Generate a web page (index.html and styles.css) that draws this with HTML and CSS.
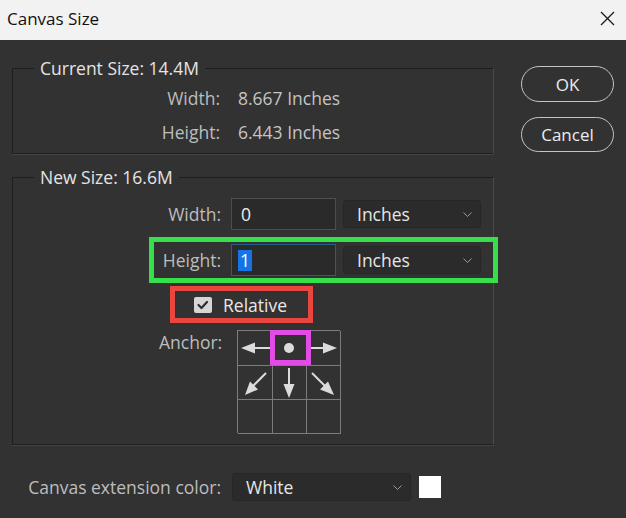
FILE: index.html
```html
<!DOCTYPE html>
<html>
<head>
<meta charset="utf-8">
<link rel="stylesheet" href="styles.css">
</head>
<body>
<div class="titlebar">
  <span class="title">Canvas Size</span>
  <svg class="close" viewBox="0 0 15 15"><path d="M1 1 L14 14 M14 1 L1 14" stroke="#1a1a1a" stroke-width="1.3" fill="none"/></svg>
</div>
<div class="dialog">
  <div class="main">
    <fieldset class="group group-current">
      <legend>Current Size: 14.4M</legend>
      <div class="info-grid">
        <span class="lbl">Width:</span><span class="val">8.667 Inches</span>
        <span class="lbl">Height:</span><span class="val">6.443 Inches</span>
      </div>
    </fieldset>
    <fieldset class="group group-new">
      <legend>New Size: 16.6M</legend>
      <div class="field-row">
        <span class="lbl field-lbl">Width:</span>
        <div class="input">0</div>
        <div class="select unit"><span>Inches</span><svg class="chev" viewBox="0 0 9 5"><path d="M0.5 0.5 L4.5 4.5 L8.5 0.5" stroke="#9a9a9a" stroke-width="1" fill="none"/></svg></div>
      </div>
      <div class="field-row hl-green">
        <span class="lbl field-lbl">Height:</span>
        <div class="input focused"><span class="sel">1</span></div>
        <div class="select unit"><span>Inches</span><svg class="chev" viewBox="0 0 9 5"><path d="M0.5 0.5 L4.5 4.5 L8.5 0.5" stroke="#9a9a9a" stroke-width="1" fill="none"/></svg></div>
      </div>
      <div class="relative-row hl-red">
        <span class="checkbox"><svg viewBox="0 0 18 16"><path d="M4.5 8 L7.5 11 L13 5" stroke="#2e2e2e" stroke-width="2.2" fill="none" stroke-linecap="round" stroke-linejoin="round"/></svg></span>
        <span class="rel-text">Relative</span>
      </div>
      <div class="anchor-row">
        <span class="lbl anchor-lbl">Anchor:</span>
        <div class="anchor-grid">
          <div class="cell"><svg viewBox="0 0 34 34"><line x1="16" y1="17" x2="34" y2="17" class="shaft"/><polygon points="3,17 17,11.5 17,22.5" class="head"/></svg></div>
          <div class="cell current"><svg viewBox="0 0 34 34"><circle cx="17" cy="17" r="5" class="head"/></svg></div>
          <div class="cell"><svg viewBox="0 0 34 34"><line x1="0" y1="17" x2="18" y2="17" class="shaft"/><polygon points="31,17 17,11.5 17,22.5" class="head"/></svg></div>
          <div class="cell"><svg viewBox="0 0 34 34"><line x1="28" y1="8" x2="15" y2="21" class="shaft"/><polygon points="7,30 20,24.5 12,16.5" class="head"/></svg></div>
          <div class="cell"><svg viewBox="0 0 34 34"><line x1="17" y1="3" x2="17" y2="20" class="shaft"/><polygon points="17,33 11.5,19 22.5,19" class="head"/></svg></div>
          <div class="cell"><svg viewBox="0 0 34 34"><line x1="6" y1="8" x2="19" y2="21" class="shaft"/><polygon points="28,30 14,24.5 22,16.5" class="head"/></svg></div>
          <div class="cell"></div>
          <div class="cell"></div>
          <div class="cell"></div>
        </div>
      </div>
    </fieldset>
    <div class="ext-row">
      <span class="lbl ext-lbl">Canvas extension color:</span>
      <div class="select ext-select"><span>White</span><svg class="chev" viewBox="0 0 9 5"><path d="M0.5 0.5 L4.5 4.5 L8.5 0.5" stroke="#9a9a9a" stroke-width="1" fill="none"/></svg></div>
      <div class="swatch"></div>
    </div>
  </div>
  <div class="buttons">
    <div class="btn">OK</div>
    <div class="btn btn-cancel">Cancel</div>
  </div>
</div>
</body>
</html>
```

FILE: styles.css
```css
html, body {
  margin: 0;
  padding: 0;
}
body {
  width: 626px;
  height: 518px;
  overflow: hidden;
  background: #323232;
  font-family: "Open Sans", "Noto Sans", sans-serif;
  font-size: 17.5px;
  color: #c4c4c4;
}
.titlebar {
  height: 40px;
  box-sizing: border-box;
  background: #f2f2f2;
  display: flex;
  align-items: center;
  justify-content: space-between;
  padding: 0 11px 0 7px;
}
.title {
  font-size: 17px;
  color: #111;
  margin-top: -4px;
}
.close {
  width: 15px;
  height: 15px;
  margin-top: -4px;
}
.dialog {
  display: flex;
}
.main {
  padding-left: 12px;
  width: 482px;
}
.group {
  margin: 0;
  padding: 0;
  min-width: 0;
  border: 1px solid #1e1e1e;
  border-right-color: #4a4a4a;
  border-bottom-color: #1e1e1e;
  box-shadow: 0 1px 0 #444;
}
.group legend {
  margin-left: 21px;
  padding: 0 6px;
  font-size: 17.5px;
  line-height: 20px;
  color: #e4e4e4;
}
.group-current {
  margin-top: 18px;
}
.info-grid {
  display: grid;
  grid-template-columns: 207px auto;
  column-gap: 18px;
  grid-auto-rows: 34px;
  line-height: 34px;
  padding: 3px 0 4px;
}
.lbl {
  color: #bdbdbd;
  text-align: right;
}
.val {
  color: #c4c4c4;
}
.group-new {
  margin-top: 13px;
  padding-bottom: 11px;
}
.field-row {
  display: flex;
  align-items: center;
  height: 34px;
  width: 339px;
  margin-left: 141px;
  margin-top: 10px;
}
.field-lbl {
  width: 67px;
  flex: none;
}
.input {
  box-sizing: border-box;
  width: 105px;
  height: 32px;
  margin-left: 10px;
  background: #2a2a2a;
  border: 1px solid #4e4e4e;
  color: #eeeeee;
  display: flex;
  align-items: center;
  padding-left: 9px;
}
.input.focused {
  border-color: #245f8c;
  padding-left: 6px;
}
.sel {
  background: #1473e6;
  color: #fff;
  line-height: 21px;
  padding: 0 2px;
}
.select {
  box-sizing: border-box;
  height: 28px;
  background: #2b2b2b;
  border: 1px solid #262626;
  border-radius: 3px;
  color: #e6e6e6;
  display: flex;
  align-items: center;
  justify-content: space-between;
  padding: 0 8px 0 13px;
}
.unit {
  width: 138px;
  margin-left: 7px;
}
.chev {
  width: 9px;
  height: 5px;
}
.hl-green {
  margin-top: 11px;
  height: 36px;
  outline: 5px solid #35e04b;
}
.relative-row {
  display: flex;
  align-items: center;
  height: 27px;
  width: 133px;
  box-sizing: border-box;
  margin-left: 162px;
  margin-top: 13px;
  padding-left: 19px;
}
.hl-red {
  outline: 5px solid #e8463e;
}
.checkbox {
  width: 18px;
  height: 16px;
  background: #d6d6d6;
  border-radius: 2px;
  display: flex;
}
.checkbox svg {
  width: 18px;
  height: 16px;
}
.rel-text {
  margin-left: 11px;
  color: #e8e8e8;
}
.anchor-row {
  display: flex;
  margin-left: 146px;
  margin-top: 12px;
}
.anchor-lbl {
  width: 78px;
  text-align: left;
  line-height: 24px;
}
.anchor-grid {
  display: grid;
  grid-template-columns: repeat(3, 34px);
  grid-auto-rows: 34px;
  border-left: 1px solid #7c7c7c;
  border-top: 1px solid #7c7c7c;
  width: max-content;
}
.cell {
  border-right: 1px solid #7c7c7c;
  border-bottom: 1px solid #7c7c7c;
  width: 34px;
  height: 34px;
}
.cell svg {
  width: 34px;
  height: 34px;
  display: block;
}
.shaft {
  stroke: #dcdcdc;
  stroke-width: 2;
}
.head {
  fill: #dcdcdc;
}
.current {
  position: relative;
  z-index: 1;
}
.current::after {
  content: "";
  position: absolute;
  left: -2px;
  right: -5px;
  top: -1px;
  bottom: 0;
  border: 5px solid #e24ce4;
}
.ext-row {
  display: flex;
  align-items: center;
  height: 28px;
  margin-top: 28px;
}
.ext-lbl {
  width: 209px;
  flex: none;
}
.ext-select {
  width: 179px;
  margin-left: 11px;
}
.swatch {
  width: 22px;
  height: 22px;
  background: #ffffff;
  margin-left: 8px;
}
.buttons {
  margin-left: 27px;
  padding-top: 26px;
  display: flex;
  flex-direction: column;
  gap: 15px;
}
.btn {
  box-sizing: border-box;
  width: 93px;
  height: 36px;
  border: 1px solid #c4c4c4;
  border-radius: 18px;
  color: #ececec;
  font-size: 17px;
  display: flex;
  align-items: center;
  justify-content: center;
}
.btn-cancel {
  height: 35px;
}
```
